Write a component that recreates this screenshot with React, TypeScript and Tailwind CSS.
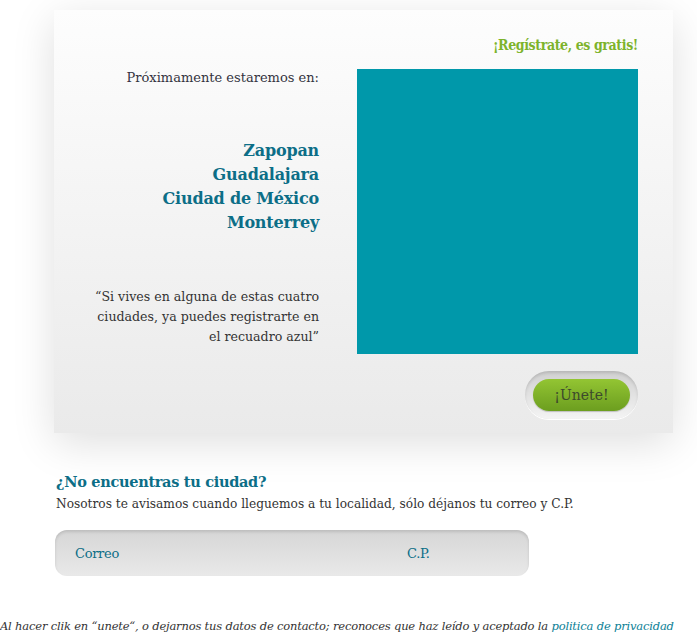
const serif = { fontFamily: '"DejaVu Serif", "Liberation Serif", serif' };

export default function App() {
  const cities = ["Zapopan", "Guadalajara", "Ciudad de México", "Monterrey"];

  return (
    <div className="w-[697px] h-[635px] bg-white overflow-hidden" style={serif}>
      <div className="pt-[10px] pl-[54px] pr-[24px] w-[697px]">
        <div className="h-[423px] bg-gradient-to-b from-[#fdfdfd] to-[#eaeaea] shadow-[0_10px_40px_rgba(0,0,0,0.13)] pt-[26px] pr-[35px] pl-[40px]">
          <p className="text-right text-[#7db32b] font-bold text-[14px] leading-[18px] tracking-[-0.4px] font-stretch-condensed">
            ¡Regístrate, es gratis!
          </p>
          <div className="flex mt-[15px] gap-[38px]">
            <div className="w-[225px] flex flex-col items-end text-right">
              <p className="text-[#333340] text-[13px] leading-[16px] mt-[1px] whitespace-nowrap">
                Próximamente estaremos en:
              </p>
              <div className="mt-[53px] text-[#0c6e87] font-bold text-[16px] leading-[24px] tracking-[-0.2px]">
                {cities.map((c) => (
                  <div key={c}>{c}</div>
                ))}
              </div>
              <p className="mt-[52px] text-[#333333] text-[12.6px] leading-[20px] whitespace-nowrap">
                “Si vives en alguna de estas cuatro
                <br />
                ciudades, ya puedes registrarte en
                <br />
                el recuadro azul”
              </p>
            </div>
            <div className="flex flex-col items-end">
              <div className="w-[281px] h-[285px] bg-[#0098aa]" />
              <div className="mt-[17px] rounded-full p-[8px] bg-gradient-to-b from-[#d0d0d0] to-[#f4f4f4] shadow-[inset_0_2px_3px_rgba(0,0,0,0.12),0_1px_0_#ffffff]">
                <div className="w-[97px] h-[32px] rounded-full bg-gradient-to-b from-[#93c533] to-[#6c9e1f] flex items-center justify-center text-[#3d4a2c] text-[14px] shadow-[0_1px_1px_rgba(0,0,0,0.2)]">
                  ¡Únete!
                </div>
              </div>
            </div>
          </div>
        </div>
      </div>

      <div className="pl-[56px] mt-[40px]">
        <h2 className="text-[#0c6e87] font-bold text-[14.5px] leading-[18px] tracking-[-0.3px]">
          ¿No encuentras tu ciudad?
        </h2>
        <p className="mt-[5px] text-[#333333] text-[12.2px] leading-[16px]">
          Nosotros te avisamos cuando lleguemos a tu localidad, sólo déjanos tu correo y C.P.
        </p>
        <div className="mt-[18px] -ml-[1px] w-[474px] h-[46px] rounded-[12px] bg-gradient-to-b from-[#d6d6d6] to-[#e9e9e9] shadow-[inset_0_2px_3px_rgba(0,0,0,0.12),0_1px_1px_rgba(255,255,255,0.9)] flex items-center text-[#0c6e87] text-[13px] tracking-[-0.3px]">
          <span className="ml-[20px] w-[332px] mt-[2px]">Correo</span>
          <span className="mt-[2px]">C.P.</span>
        </div>
      </div>

      <p className="mt-[42px] text-[#333333] italic text-[11.5px] leading-[16px] tracking-[-0.18px] whitespace-nowrap">
        Al hacer clik en “unete“, o dejarnos tus datos de contacto; reconoces que haz leído y aceptado la{" "}
        <span className="text-[#0c7f96]">politica de privacidad</span>
      </p>
    </div>
  );
}
